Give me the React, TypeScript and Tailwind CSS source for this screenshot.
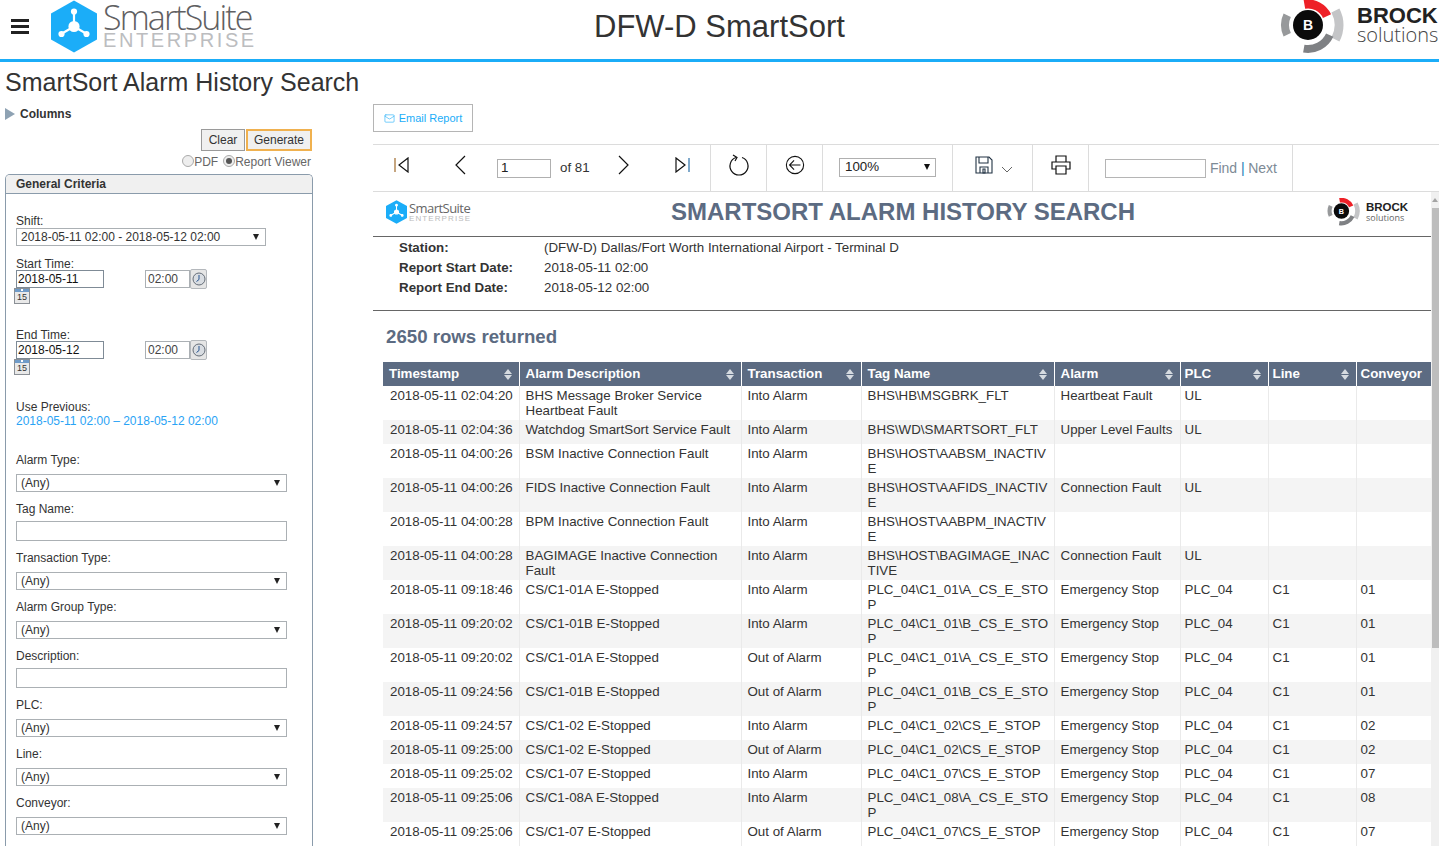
import type { ReactNode } from "react";
import { Mail } from "lucide-react";

const font = "font-['Liberation_Sans',Arial,sans-serif]";

type Row = [string, string, string, string, string, string, string, string];

const rows: Row[] = [
  ["2018-05-11 02:04:20", "BHS Message Broker Service Heartbeat Fault", "Into Alarm", "BHS\\HB\\MSGBRK_FLT", "Heartbeat Fault", "UL", "", ""],
  ["2018-05-11 02:04:36", "Watchdog SmartSort Service Fault", "Into Alarm", "BHS\\WD\\SMARTSORT_FLT", "Upper Level Faults", "UL", "", ""],
  ["2018-05-11 04:00:26", "BSM Inactive Connection Fault", "Into Alarm", "BHS\\HOST\\AABSM_INACTIVE", "", "", "", ""],
  ["2018-05-11 04:00:26", "FIDS Inactive Connection Fault", "Into Alarm", "BHS\\HOST\\AAFIDS_INACTIVE", "Connection Fault", "UL", "", ""],
  ["2018-05-11 04:00:28", "BPM Inactive Connection Fault", "Into Alarm", "BHS\\HOST\\AABPM_INACTIVE", "", "", "", ""],
  ["2018-05-11 04:00:28", "BAGIMAGE Inactive Connection Fault", "Into Alarm", "BHS\\HOST\\BAGIMAGE_INACTIVE", "Connection Fault", "UL", "", ""],
  ["2018-05-11 09:18:46", "CS/C1-01A E-Stopped", "Into Alarm", "PLC_04\\C1_01\\A_CS_E_STOP", "Emergency Stop", "PLC_04", "C1", "01"],
  ["2018-05-11 09:20:02", "CS/C1-01B E-Stopped", "Into Alarm", "PLC_04\\C1_01\\B_CS_E_STOP", "Emergency Stop", "PLC_04", "C1", "01"],
  ["2018-05-11 09:20:02", "CS/C1-01A E-Stopped", "Out of Alarm", "PLC_04\\C1_01\\A_CS_E_STOP", "Emergency Stop", "PLC_04", "C1", "01"],
  ["2018-05-11 09:24:56", "CS/C1-01B E-Stopped", "Out of Alarm", "PLC_04\\C1_01\\B_CS_E_STOP", "Emergency Stop", "PLC_04", "C1", "01"],
  ["2018-05-11 09:24:57", "CS/C1-02 E-Stopped", "Into Alarm", "PLC_04\\C1_02\\CS_E_STOP", "Emergency Stop", "PLC_04", "C1", "02"],
  ["2018-05-11 09:25:00", "CS/C1-02 E-Stopped", "Out of Alarm", "PLC_04\\C1_02\\CS_E_STOP", "Emergency Stop", "PLC_04", "C1", "02"],
  ["2018-05-11 09:25:02", "CS/C1-07 E-Stopped", "Into Alarm", "PLC_04\\C1_07\\CS_E_STOP", "Emergency Stop", "PLC_04", "C1", "07"],
  ["2018-05-11 09:25:06", "CS/C1-08A E-Stopped", "Into Alarm", "PLC_04\\C1_08\\A_CS_E_STOP", "Emergency Stop", "PLC_04", "C1", "08"],
  ["2018-05-11 09:25:06", "CS/C1-07 E-Stopped", "Out of Alarm", "PLC_04\\C1_07\\CS_E_STOP", "Emergency Stop", "PLC_04", "C1", "07"],
];

const columns = [
  { name: "Timestamp", cls: "w-[136px]" },
  { name: "Alarm Description", cls: "w-[222px]" },
  { name: "Transaction", cls: "w-[120px]" },
  { name: "Tag Name", cls: "w-[193px]" },
  { name: "Alarm", cls: "w-[126px]" },
  { name: "PLC", cls: "w-[88px]" },
  { name: "Line", cls: "w-[88px]" },
  { name: "Conveyor", cls: "w-[75px]" },
];

function Hexagon({ className }: { className: string }) {
  return (
    <svg viewBox="0 0 46 52" className={className}>
      <path d="M23 0 46 13V39L23 52 0 39V13Z" fill="#1badf8" />
      <g stroke="#fff" strokeWidth="2.2" fill="#fff">
        <path d="M23 26V11M23 26 11 33M23 26 35 33" />
        <circle cx="23" cy="26" r="4.5" />
        <circle cx="23" cy="11" r="2" />
        <circle cx="10.5" cy="33.5" r="2" />
        <circle cx="35.5" cy="33.5" r="2" />
      </g>
    </svg>
  );
}

function BrockMark({ className }: { className: string }) {
  return (
    <svg viewBox="0 0 66 54" fill="none" className={className}>
      <circle cx="28" cy="25" r="15" fill="#0b0b0b" />
      <text x="28" y="30" textAnchor="middle" fill="#fff" fontSize="14" fontWeight="700" fontFamily="Liberation Sans">B</text>
      <path d="M24.4 4.3A21 21 0 0 1 47 16.1" stroke="#ee2027" strokeWidth="9" />
      <path d="M55.4 10.5A31 31 0 0 1 55.4 39.5" stroke="#c4c5c7" strokeWidth="9" />
      <path d="M49.7 35.1A24 24 0 0 1 23.8 48.6" stroke="#7f8184" strokeWidth="8" />
      <path d="M7.2 34.7A23 23 0 0 1 7.2 15.3" stroke="#97999b" strokeWidth="8" />
    </svg>
  );
}

function SelectBox({ value, className }: { value: string; className: string }) {
  return (
    <div className={`flex h-[18px] items-center justify-between border border-[#abb0b4] bg-white pl-1 pr-[6px] text-[12px] text-[#333] ${className}`}>
      <span>{value}</span>
      <span className="h-0 w-0 border-x-[3px] border-t-[6px] border-x-transparent border-t-[#222]" />
    </div>
  );
}

function Label({ children, className = "" }: { children: ReactNode; className?: string }) {
  return <div className={`translate-y-px text-[12px] leading-[14px] text-[#333] ${className}`}>{children}</div>;
}

function AnySelect({ label, mt }: { label: string; mt: string }) {
  return (
    <div className={mt}>
      <Label>{label}</Label>
      <SelectBox value="(Any)" className="mt-2 w-[271px]" />
    </div>
  );
}

function TextField({ label, mt }: { label: string; mt: string }) {
  return (
    <div className={mt}>
      <Label>{label}</Label>
      <div className="mt-[6px] h-5 w-[271px] border border-[#abb0b4] bg-white" />
    </div>
  );
}

function CalendarIcon() {
  return (
    <div className="-ml-[2px] -mt-px flex h-4 w-4 flex-col border border-[#8b9096] bg-[#e9e9e9]">
      <div className="flex h-[4px] justify-center bg-[#6f9bc8]">
        <div className="h-[2px] w-[2px] bg-white" />
      </div>
      <div className="text-center text-[9px] leading-[11px] text-[#333]">15</div>
    </div>
  );
}

function DateTime({ label, date, mt }: { label: string; date: string; mt: string }) {
  return (
    <div className={mt}>
      <Label>{label}</Label>
      <div className="-mt-px flex items-center">
        <div className="flex h-[18px] w-[88px] items-center border border-[#7f8b96] pl-[1px] text-[12px] text-[#111]">{date}</div>
        <div className="ml-[41px] flex h-[18px] w-[45px] items-center border border-[#abb0b4] pl-[2px] text-[12px] text-[#444]">02:00</div>
        <div className="flex h-5 w-[17px] items-center justify-center rounded-[2px] border border-[#b4b8bc] bg-[#e6e6e6]">
          <svg viewBox="0 0 14 14" className="h-[14px] w-[14px]">
            <circle cx="7" cy="7" r="6" fill="#d9dde2" stroke="#656d78" />
            <path d="M7 3V7.5L4.5 9.5" fill="none" stroke="#24528f" />
          </svg>
        </div>
      </div>
      <CalendarIcon />
    </div>
  );
}

function Sidebar() {
  return (
    <aside className="w-[373px] shrink-0 pl-[5px]">
      <div className="mt-[10px] flex h-[14px] items-center">
        <span className="h-0 w-0 border-y-[6px] border-l-[10px] border-y-transparent border-l-[#8ea2b3]" />
        <span className="ml-[5px] text-[12px] font-bold text-[#333]">Columns</span>
      </div>
      <div className="mt-[8px] flex w-[307px] justify-end gap-px">
        <div className="flex h-[22px] w-11 items-center justify-center border border-[#9a9a9a] bg-[#f0f0f0] text-[12px] text-[#333]">Clear</div>
        <div className="flex h-[22px] w-[66px] items-center justify-center border-2 border-[#f0b14f] bg-[#f0f0f0] text-[12px] text-[#333]">Generate</div>
      </div>
      <div className="mt-[3px] flex h-4 w-[306px] items-center justify-end text-[12px] text-[#666]">
        <span className="mb-[3px] h-3 w-3 rounded-full border border-[#aaa] bg-[#eee]" />
        <span className="mr-[5px]">PDF</span>
        <span className="mb-[3px] flex h-3 w-3 items-center justify-center rounded-full border border-[#aaa] bg-[#eee]">
          <span className="h-[6px] w-[6px] rounded-full bg-[#555]" />
        </span>
        <span>Report Viewer</span>
      </div>
      <section className="mt-[4px] w-[308px] overflow-hidden rounded-t-[5px] border border-b-0 border-[#8a9bab]">
        <div className="flex h-[19px] items-center border-b border-[#8a9bab] bg-[#f0f0f0] pl-[10px] text-[12px] font-bold text-[#333]">General Criteria</div>
        <div className="h-[700px] pl-[10px]">
          <Label className="mt-[19px]">Shift:</Label>
          <SelectBox value="2018-05-11 02:00 - 2018-05-12 02:00" className="mt-px w-[250px]" />
          <DateTime label="Start Time:" date="2018-05-11" mt="mt-[10px]" />
          <DateTime label="End Time:" date="2018-05-12" mt="mt-[23px]" />
          <Label className="mt-[24px]">Use Previous:</Label>
          <div className="mt-px text-[12px] leading-[14px] text-[#2aa3f5]">2018-05-11 02:00 – 2018-05-12 02:00</div>
          <AnySelect label="Alarm Type:" mt="mt-[24px]" />
          <TextField label="Tag Name:" mt="mt-[9px]" />
          <AnySelect label="Transaction Type:" mt="mt-[9px]" />
          <AnySelect label="Alarm Group Type:" mt="mt-[9px]" />
          <TextField label="Description:" mt="mt-[9px]" />
          <AnySelect label="PLC:" mt="mt-[9px]" />
          <AnySelect label="Line:" mt="mt-[9px]" />
          <AnySelect label="Conveyor:" mt="mt-[9px]" />
        </div>
      </section>
    </aside>
  );
}

function ToolCell({ className, children }: { className: string; children: ReactNode }) {
  return <div className={`relative flex h-full shrink-0 items-center border-r border-[#dcdcdc] ${className}`}>{children}</div>;
}

function Toolbar() {
  const s = { fill: "none", stroke: "#111", strokeWidth: 1.2 };
  return (
    <div className="flex h-[48px] items-center border-y border-[#dcdcdc] text-[13.33px]">
      <ToolCell className="w-[338px]">
        <svg viewBox="0 0 18 16" {...s} className="ml-[20px] -mt-[6px] h-4 w-[18px]"><path d="M2 1V15" stroke="#a06a2a" /><path d="M15 1 6 8l9 7Z" /></svg>
        <svg viewBox="0 0 14 20" {...s} className="ml-[42px] -mt-[6px] h-5 w-[14px]"><path d="M12 1 3 10l9 9" /></svg>
        <div className="ml-[30px] flex h-[19px] w-[54px] items-center border border-[#b0b0b0] pl-[3px] text-[#222]">1</div>
        <span className="ml-[9px] text-[#333]">of 81</span>
        <svg viewBox="0 0 14 20" {...s} className="ml-[27px] -mt-[6px] h-5 w-[14px]"><path d="M2 1l9 9-9 9" /></svg>
        <svg viewBox="0 0 18 16" {...s} className="ml-[42px] -mt-[6px] h-4 w-[18px]"><path d="M16 1V15" stroke="#2a70a8" /><path d="M3 1l9 7-9 7Z" /></svg>
      </ToolCell>
      <ToolCell className="w-[56px] justify-center">
        <svg viewBox="0 0 22 22" {...s} className="-mt-[6px] h-[22px] w-[22px]"><path d="M8 3.5a9 9 0 1 0 6 0" /><path d="M5 1l4 2.5L7 7" /></svg>
      </ToolCell>
      <ToolCell className="w-[56px] justify-center">
        <svg viewBox="0 0 22 22" {...s} className="-mt-[6px] h-5 w-5"><circle cx="11" cy="11" r="9.5" /><path d="M17 11H5M10 6l-5 5 5 5" /></svg>
      </ToolCell>
      <ToolCell className="w-[130px]">
        <div className="ml-4 -mt-[2px] flex h-[19px] w-[97px] items-center justify-between border border-[#b0b0b0] px-[5px] text-[#222]">
          <span>100%</span>
          <span className="h-0 w-0 border-x-[3px] border-t-[6px] border-x-transparent border-t-[#111]" />
        </div>
      </ToolCell>
      <ToolCell className="w-[80px]">
        <svg viewBox="0 0 18 18" fill="none" stroke="#111" strokeWidth="1.1" className="ml-[22px] -mt-[6px] h-[18px] w-[18px]">
          <path d="M1 1H14L17 4V17H1Z" stroke="#234" />
          <path d="M4 1V7H13V1M5 17V11H13V17M8 13H10V17H8Z" stroke="#234" />
        </svg>
        <svg viewBox="0 0 12 8" fill="none" stroke="#666" className="ml-[8px] mt-1 h-2 w-[12px]"><path d="M1 1l5 5 5-5" /></svg>
      </ToolCell>
      <ToolCell className="w-[56px] justify-center">
        <svg viewBox="0 0 20 20" {...s} className="-mt-[6px] h-5 w-5"><path d="M5 7V1H15V7M5 14H1V7H19V14H15" /><path d="M5 11H15V19H5Z" /></svg>
      </ToolCell>
      <ToolCell className="w-[204px]">
        <div className="ml-4 h-[19px] w-[101px] border border-[#b5b5b5]" />
        <span className="ml-1 text-[14px] tracking-[-0.05px] text-[#7d8a96]">Find <span className="text-[#1d7fb8]">|</span> Next</span>
      </ToolCell>
    </div>
  );
}

function ReportHeader() {
  return (
    <div className="flex h-[45px] items-center border-b border-[#666] pb-[4px]">
      <div className="ml-[13px] flex w-[200px] items-center">
        <Hexagon className="h-6 w-[21px]" />
        <div className="ml-[2px] flex flex-col leading-none">
          <span className="font-['Open_Sans',sans-serif] text-[13px] leading-[12px] tracking-[-0.55px] text-[#666]">SmartSuite</span>
          <span className="text-[8px] leading-[9px] tracking-[1.1px] text-[#bbb]">ENTERPRISE</span>
        </div>
      </div>
      <div className="ml-[85px] w-[464px] whitespace-nowrap text-[24px] font-bold text-[#5c6b82]">SMARTSORT ALARM HISTORY SEARCH</div>
      <div className="ml-[192px] flex items-center">
        <BrockMark className="h-[28px] w-[34px]" />
        <div className="ml-[5px] flex flex-col">
          <span className="text-[11.5px] font-bold leading-[11px] text-[#222]">BROCK</span>
          <span className="font-['Open_Sans',sans-serif] text-[9px] leading-[9px] text-[#666]">solutions</span>
        </div>
      </div>
    </div>
  );
}

function ReportInfo() {
  const info = [
    ["Station:", "(DFW-D) Dallas/Fort Worth International Airport - Terminal D"],
    ["Report Start Date:", "2018-05-11 02:00"],
    ["Report End Date:", "2018-05-12 02:00"],
  ];
  return (
    <div className="flex h-[74px] flex-col border-b border-[#666] pt-[1px]">
      {info.map(([k, v]) => (
        <div key={k} className="flex h-5 items-center pl-[26px] text-[13.33px] text-[#333]">
          <span className="w-[145px] font-bold">{k}</span>
          <span>{v}</span>
        </div>
      ))}
    </div>
  );
}

function SortIcon() {
  return (
    <span className="absolute right-[7px] top-[7px] flex flex-col gap-px">
      <span className="h-0 w-0 border-x-[4px] border-b-[5px] border-x-transparent border-b-[#d5dae0]" />
      <span className="h-0 w-0 border-x-[4px] border-t-[5px] border-x-transparent border-t-[#d5dae0]" />
    </span>
  );
}

function AlarmTable() {
  return (
    <table className="ml-[10px] w-[1048px] table-fixed border-collapse">
      <thead>
        <tr className="h-6 bg-[#5c6b82]">
          {columns.map((c, i) => (
            <th key={c.name} className={`relative border-l border-white text-left text-[13.33px] font-bold text-white first:border-l-0 ${c.cls} ${i < 5 ? "pl-[6px]" : "pl-[4px]"}`}>
              {c.name}
              {c.name !== "Conveyor" && <SortIcon />}
            </th>
          ))}
        </tr>
      </thead>
      <tbody>
        {rows.map((r, i) => (
          <tr key={i} className={`h-6 ${i % 2 === 1 ? "bg-[#f4f4f4]" : "bg-white"}`}>
            {r.map((cell, j) => (
              <td key={j} className={`border-l border-[#eaeaea] pb-[2px] pt-[2px] align-top text-[13.33px] leading-[15px] text-[#333] first:border-l-0 ${j === 3 ? "break-all" : ""} ${j >= 5 ? "pl-[4px]" : j === 0 ? "pl-[7px]" : "pl-[6px]"}`}>
                {cell}
              </td>
            ))}
          </tr>
        ))}
      </tbody>
    </table>
  );
}

export default function App() {
  return (
    <div className={`h-[846px] w-[1439px] overflow-hidden bg-white ${font}`}>
      <header className="relative flex h-[62px] items-start border-b-[3px] border-[#1badf8]">
        <div className="ml-[11px] mt-[19px] flex w-[18px] flex-col gap-[3px]">
          <span className="h-[3px] bg-[#222]" />
          <span className="h-[3px] bg-[#222]" />
          <span className="h-[3px] bg-[#222]" />
        </div>
        <Hexagon className="ml-[22px] h-[53px] w-[46px]" />
        <div className="ml-[6px] flex flex-col">
          <span className="mt-[3px] font-['Open_Sans',sans-serif] text-[34px] font-light leading-[28px] tracking-[-1.9px] text-[#5f6062]">SmartSuite</span>
          <span className="mt-[2px] text-[20px] leading-[15px] tracking-[2.6px] text-[#bcbdbf]">ENTERPRISE</span>
        </div>
        <div className="absolute left-[594px] top-[9px] text-[31px] leading-[36px] text-[#333]">DFW-D SmartSort</div>
        <div className="absolute left-[1280px] top-0 flex">
          <BrockMark className="h-[54px] w-[66px]" />
          <div className="ml-[11px] mt-[5px] flex flex-col">
            <span className="text-[22px] font-bold leading-[22px] text-[#222]">BROCK</span>
            <span className="-mt-px font-['Open_Sans',sans-serif] text-[20px] font-light leading-[18px] text-[#444]">solutions</span>
          </div>
        </div>
      </header>
      <h1 className="ml-[5px] mt-[5px] text-[25px] font-normal leading-[30px] text-[#333]">SmartSort Alarm History Search</h1>
      <div className="flex">
        <Sidebar />
        <main className="relative w-[1066px]">
          <div className="mt-[7px] flex h-[28px] w-[100px] items-center justify-center gap-1 border border-[#b5b5b5] text-[11px] text-[#1badf8]">
            <Mail size={11} strokeWidth={1.3} />
            Email Report
          </div>
          <div className="mt-3">
            <Toolbar />
          </div>
          <div className="relative">
            <ReportHeader />
            <ReportInfo />
            <div className="ml-[13px] mt-[14px] text-[18.67px] font-bold leading-[24px] text-[#5c6b82]">2650 rows returned</div>
            <div className="mt-[13px]">
              <AlarmTable />
            </div>
            <div className="absolute right-0 top-0 h-[700px] w-2 bg-[#f0f0f0]">
              <div className="mx-auto mt-[6px] h-0 w-0 border-x-[3px] border-b-[4px] border-x-transparent border-b-[#a3a3a3]" />
              <div className="ml-px mt-[6px] h-[440px] bg-[#bdbdbd]" />
            </div>
          </div>
        </main>
      </div>
    </div>
  );
}
